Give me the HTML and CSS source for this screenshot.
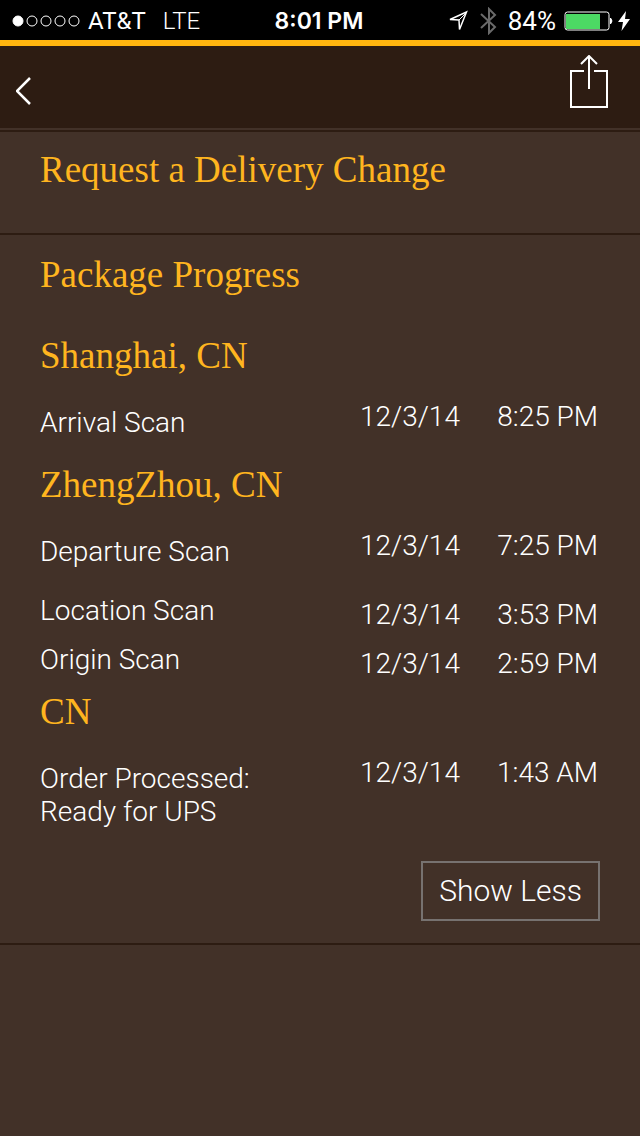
FILE: index.html
```html
<!DOCTYPE html>
<html lang="en">
<head>
<meta charset="utf-8">
<meta name="viewport" content="width=device-width, initial-scale=1">
<title>Package Progress</title>
<link rel="stylesheet" href="styles.css">
</head>
<body>
<div class="status">
  <div class="status-side">
    <svg class="signal" width="70" height="14" viewBox="0 0 70 14" fill="none" stroke="#fff" aria-hidden="true"><circle cx="6" cy="7" r="5" fill="#fff"/><circle cx="20" cy="7" r="5"/><circle cx="34" cy="7" r="5"/><circle cx="48" cy="7" r="5"/><circle cx="62" cy="7" r="5"/></svg>
    <span class="carrier">AT&amp;T</span>
    <span class="network">LTE</span>
  </div>
  <span class="clock">8:01 PM</span>
  <div class="status-side status-right">
    <svg width="20" height="22" viewBox="0 0 20 22" fill="none" stroke="#fff" stroke-width="1.5" aria-hidden="true"><path d="M2 9.500 18.500 2 11.500 19.500 11 10Z"/><path d="M11 10 18 3" stroke-width="1"/></svg>
    <svg class="bluetooth" width="18" height="28" viewBox="0 0 18 28" fill="none" stroke="#6a6a6a" stroke-width="2" aria-hidden="true"><path d="M1 7 15 20 9 26V2L15 8 1 21"/></svg>
    <span class="percent">84%</span>
    <svg class="battery" width="50" height="20" viewBox="0 0 50 20" aria-hidden="true"><rect x="1" y="1" width="44" height="18" rx="2.500" fill="none" stroke="#fff"/><rect x="2" y="3" width="34" height="15" fill="#4cd964"/><path d="M46.500 7q3 3 0 6z" fill="#fff" stroke="#fff"/></svg>
    <svg width="12" height="20" viewBox="0 0 12 20" fill="#fff" aria-hidden="true"><path d="M8 0 0 11h5L3.500 20 12 8H7z"/></svg>
  </div>
</div>
<header class="nav">
  <button class="icon-button back" type="button" aria-label="Back"><svg width="16" height="28" viewBox="0 0 16 28" fill="none" stroke="#fff" stroke-width="2.500"><path d="M14 1 1 14 14 27"/></svg></button>
  <button class="icon-button share" type="button" aria-label="Share"><svg width="38" height="54" viewBox="0 0 38 54" fill="none" stroke="#fff" stroke-width="2"><path d="M14 16H1V52H37V16H24M19 34V1M11 9 19 1 27 9"/></svg></button>
</header>
<main>
  <section class="panel change">
    <h2 class="title"><a class="title-link" href="#change">Request a Delivery Change</a></h2>
  </section>
  <section class="panel progress">
    <h2 class="title">Package Progress</h2>
    <div class="stops">
      <h3 class="title" id="shanghai">Shanghai, CN</h3>
      <table class="scans" aria-labelledby="shanghai">
        <tr><td>Arrival Scan</td><td class="date">12/3/14</td><td class="time">8:25 PM</td></tr>
      </table>
      <h3 class="title" id="zhengzhou">ZhengZhou, CN</h3>
      <table class="scans" aria-labelledby="zhengzhou">
        <tr><td>Departure Scan</td><td class="date">12/3/14</td><td class="time">7:25 PM</td></tr>
        <tr><td>Location Scan</td><td class="date">12/3/14</td><td class="time">3:53 PM</td></tr>
        <tr><td>Origin Scan</td><td class="date">12/3/14</td><td class="time">2:59 PM</td></tr>
      </table>
      <h3 class="title" id="cn">CN</h3>
      <table class="scans" aria-labelledby="cn">
        <tr><td>Order Processed:<br>Ready for UPS</td><td class="date">12/3/14</td><td class="time">1:43 AM</td></tr>
      </table>
    </div>
    <button class="toggle" type="button">Show Less</button>
  </section>
</main>
</body>
</html>
```
FILE: styles.css
```css
* { box-sizing: border-box; }
body {
  margin: 0;
  min-height: 100vh;
  background: #423128;
  color: #fff;
  font-family: Roboto, "Liberation Sans", sans-serif;
  font-size: 28px;
  font-weight: 300;
  line-height: 33px;
}
svg { display: block; flex: none; }
button { font: inherit; color: inherit; background: none; border: 0; padding: 0; cursor: pointer; }

.status {
  display: grid;
  grid-template-columns: 1fr auto 1fr;
  align-items: center;
  height: 40px;
  padding: 2px 10px 0 12px;
  background: #000;
  font-family: Roboto, sans-serif;
  font-size: 24px;
  font-weight: 400;
}
.status-side { display: flex; align-items: center; }
.status-right { justify-content: flex-end; }
.carrier { margin-left: 6px; }
.network { margin-left: 17px; font-weight: 300; }
.clock { padding-right: 4px; font-family: Inter, sans-serif; font-size: 23px; font-weight: 600; }
.bluetooth { margin-left: 12px; }
.percent { margin-left: 10px; font-size: 26px; }
.battery { margin: 0 4px 0 8px; }

.nav {
  display: flex;
  justify-content: space-between;
  align-items: center;
  height: 88px;
  padding: 0 32px 0 16px;
  background: #2d1c12;
  border-top: 6px solid #ffb50f;
}
.back { padding-top: 8px; }
.share { padding-bottom: 10px; }

.panel { padding: 0 40px; border-bottom: 2px solid #2d1c12; }
.change { margin-top: 2px; padding-top: 18px; padding-bottom: 43px; border-top: 2px solid #2d1c12; }
.progress { padding-top: 20px; padding-bottom: 22px; }
.title {
  margin: 0;
  color: #ffb51f;
  font-family: "Liberation Serif", serif;
  font-size: 37px;
  font-weight: 400;
  line-height: 40px;
}
.title-link { color: inherit; text-decoration: none; }
.stops { margin-top: 41px; }

.scans { width: 100%; border-collapse: collapse; table-layout: fixed; }
.scans td { padding: 0 0 16px; vertical-align: top; }
.scans .date { width: 133px; padding-top: 4px; padding-bottom: 0; }
.scans .time { width: 107px; padding-top: 4px; padding-bottom: 0; padding-right: 2px; text-align: right; white-space: nowrap; }
.scans tr:first-child td { padding-top: 30px; padding-bottom: 26px; }
.scans tr:first-child .date,
.scans tr:first-child .time { padding-top: 24px; }

.toggle {
  display: block;
  margin: 7px 0 0 auto;
  padding: 12px 16px;
  border: 2px solid #777270;
  font-size: 30px;
  line-height: 32px;
}
```
